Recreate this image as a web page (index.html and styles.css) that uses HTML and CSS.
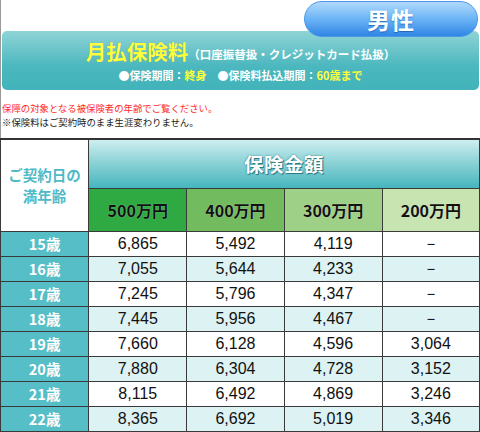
FILE: index.html
```html
<!DOCTYPE html>
<html lang="ja">
<head>
<meta charset="utf-8">
<link rel="stylesheet" href="styles.css">
</head>
<body>
<div class="page">
  <div class="head">
    <div class="badge">男性</div>
    <div class="banner">
      <div class="title"><span class="big">月払保険料</span><span class="sub">（口座振替扱・クレジットカード払扱）</span></div>
      <div class="terms">●保険期間：<span class="y">終身</span>　●保険料払込期間：<span class="y">60歳まで</span></div>
    </div>
    <p class="note red">保障の対象となる被保険者の年齢でご覧ください。</p>
    <p class="note">※保険料はご契約時のまま生涯変わりません。</p>
  </div>
  <table class="rates">
    <colgroup><col class="c0"><col class="c1"><col class="c2"><col class="c1"><col class="c2"></colgroup>
    <thead>
      <tr class="h1"><th rowspan="2" class="agehead">ご契約日の<br>満年齢</th><th colspan="4" class="sum">保険金額</th></tr>
      <tr class="h2"><th class="a5">500万円</th><th class="a4">400万円</th><th class="a3">300万円</th><th class="a2">200万円</th></tr>
    </thead>
    <tbody>
      <tr><th>15歳</th><td>6,865</td><td>5,492</td><td>4,119</td><td>－</td></tr>
      <tr class="alt"><th>16歳</th><td>7,055</td><td>5,644</td><td>4,233</td><td>－</td></tr>
      <tr><th>17歳</th><td>7,245</td><td>5,796</td><td>4,347</td><td>－</td></tr>
      <tr class="alt"><th>18歳</th><td>7,445</td><td>5,956</td><td>4,467</td><td>－</td></tr>
      <tr><th>19歳</th><td>7,660</td><td>6,128</td><td>4,596</td><td>3,064</td></tr>
      <tr class="alt"><th>20歳</th><td>7,880</td><td>6,304</td><td>4,728</td><td>3,152</td></tr>
      <tr><th>21歳</th><td>8,115</td><td>6,492</td><td>4,869</td><td>3,246</td></tr>
      <tr class="alt"><th>22歳</th><td>8,365</td><td>6,692</td><td>5,019</td><td>3,346</td></tr>
    </tbody>
  </table>
</div>
</body>
</html>
```
FILE: styles.css
```css
html, body { margin: 0; padding: 0; background: #fff; }
body { font-family: "Noto Sans CJK JP", "Noto Sans", sans-serif; width: 480px; overflow: hidden; }
.page { width: 480px; }
.head { position: relative; height: 138px; border-left: 1px solid #9a9a9a; box-sizing: border-box; }
.badge {
  position: absolute; left: 303px; top: 1px; width: 174px; height: 36px;
  border-radius: 18px; box-sizing: border-box; border: 1px solid #4a98e6;
  background: linear-gradient(#b0d9fc 0%, #72b8f6 45%, #2f86e6 100%);
  color: #fff; font-weight: 700; font-size: 23px; line-height: 34px; text-align: center;
  letter-spacing: 1px; text-shadow: 0 1px 1px rgba(0,60,140,0.5); z-index: 2;
}
.banner {
  position: relative; top: 31px; margin-left: 1px; width: 477px; height: 59px;
  border-radius: 5px; background: linear-gradient(#8fd4d6, #4bb7be 60%, #42b3ba);
  text-align: center; color: #fff;
}
.title { padding-top: 7px; height: 26px; line-height: 26px; white-space: nowrap; }
.big { color: #ffff3a; font-size: 20.5px; font-weight: 700; text-shadow: 0 0 1px rgba(0,90,90,0.3); }
.sub { font-size: 11.5px; font-weight: 700; vertical-align: 1px; }
.terms { font-size: 11px; font-weight: 700; line-height: 16px; margin-top: 3px; }
.y { color: #ffff3a; }
.note { margin: 0; font-size: 9.4px; line-height: 14px; padding-left: 1px; color: #222; position: relative; top: 42px; white-space: nowrap; }
.note.red { color: #ff2a2a; }

.rates { border-collapse: collapse; table-layout: fixed; width: 480px; border-top: 2px solid #333; }
.c0 { width: 88px; }
.c1 { width: 98px; }
.c2 { width: 97px; }
.rates th, .rates td { border: 1px solid #3a3a3a; padding: 0; text-align: center; }
.h1 { height: 49px; }
.h2 { height: 43px; }
.agehead { background: #fff; color: #4fbac7; font-size: 14.5px; font-weight: 700; line-height: 21px; padding-top: 5px; border-left: 1px solid #555; }
.sum {
  background: linear-gradient(#cdeef0, #8ed3d7 45%, #45b5bd);
  color: #fff; font-size: 19.5px; font-weight: 700; letter-spacing: 0.5px;
  text-shadow: 1px 1px 0 #2c7c84, 0 0 2px #2c7c84; padding-bottom: 5px;
}
.h2 th { font-size: 16px; font-weight: 700; color: #111; text-shadow: 0 0 1px rgba(255,255,255,0.6); }
.a5 { background: #2faa43; }
.a4 { background: #72bb5f; }
.a3 { background: #9fd088; }
.a2 { background: #c7e4b1; }
tbody tr { height: 25px; }
tbody th { background: #56bec6; color: #fff; font-size: 14.5px; font-weight: 700; line-height: 20px; }
tbody td { font-family: "Liberation Sans", Arial, sans-serif; font-size: 16px; color: #111; background: #fff; line-height: 20px; padding: 2px 0 0 8px; }
tbody tr.alt td { background: #ddf2f3; }
```
